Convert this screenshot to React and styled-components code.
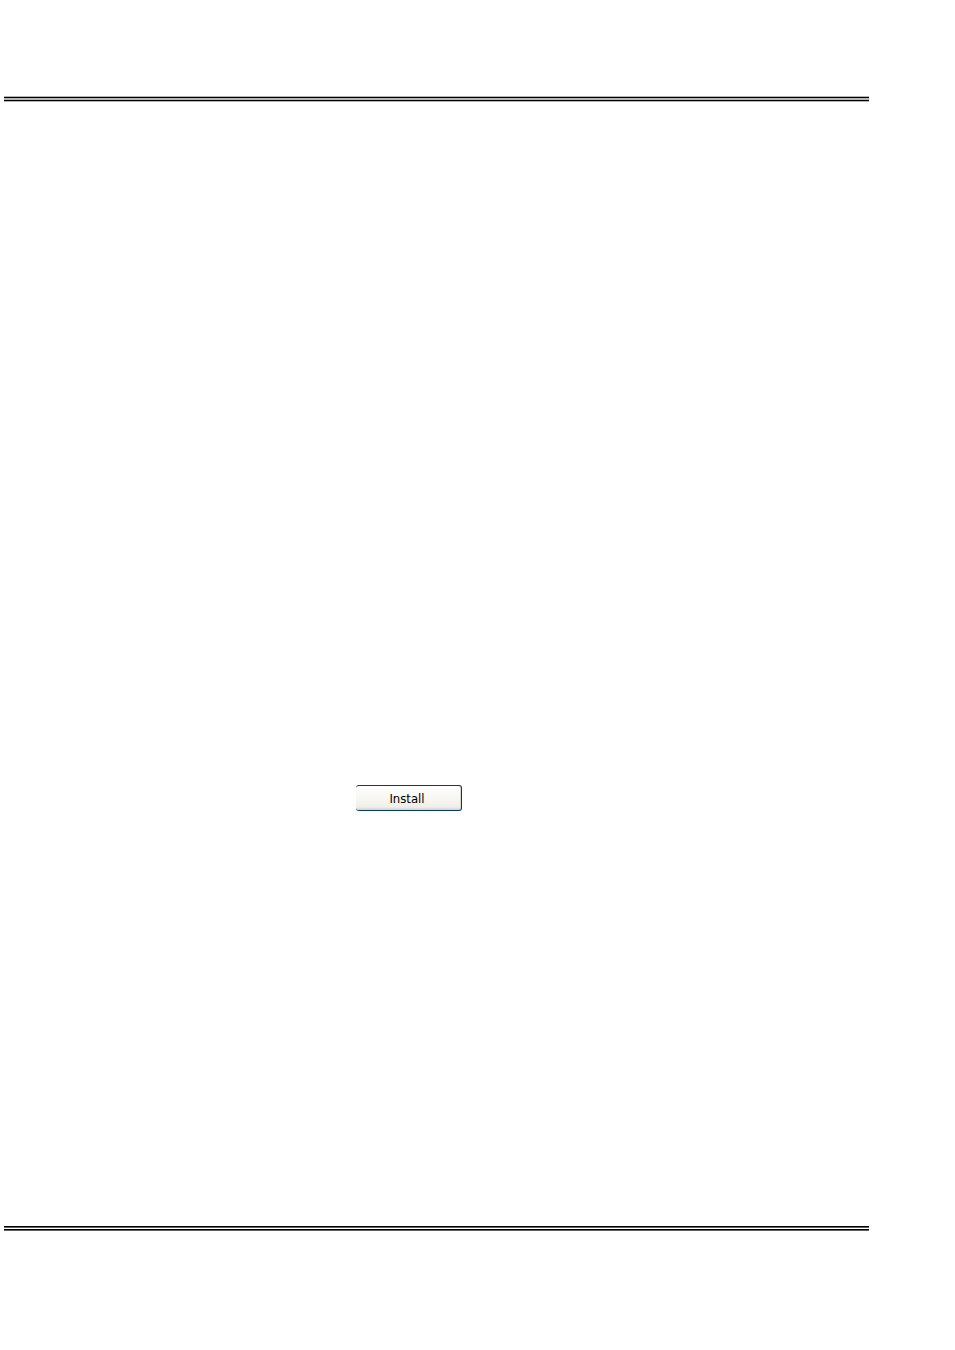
import React, { Fragment } from 'react';
import styled, { createGlobalStyle } from 'styled-components';

function App() {
  return (
    <Fragment>
      <GlobalStyle />
      <StyledPage>
        <StyledHeaderRule />
        <StyledContent>
          <StyledButton type="button">Install</StyledButton>
        </StyledContent>
        <StyledFooterRule />
      </StyledPage>
    </Fragment>
  );
}

const GlobalStyle = createGlobalStyle`
  * {
    box-sizing: border-box;
  }

  body {
    margin: 0;
    background: #ffffff;
  }
`;

const StyledPage = styled.div`
  display: flex;
  flex-direction: column;
  min-height: 100vh;
  padding: 96px 86px 119px 4px;
`;

const StyledRule = styled.hr`
  width: 100%;
  margin: 0;
  border: none;
  flex: none;
`;

const StyledHeaderRule = styled(StyledRule)`
  height: 6px;
  background: linear-gradient(
    #b4b4b4 1px,
    #000000 1px 2px,
    #b4b4b4 2px 4px,
    #000000 4px 5px,
    #b4b4b4 5px
  );
`;

const StyledFooterRule = styled(StyledRule)`
  height: 5px;
  background: linear-gradient(
    #000000 1px,
    #606060 1px 2px,
    #ffffff 2px 3px,
    #000000 3px 4px,
    #606060 4px
  );
`;

const StyledContent = styled.main`
  display: flex;
  flex: 1;
  align-items: flex-start;
  padding: 683px 0 0 352px;
`;

// the left side of the button has no border
const StyledButton = styled.button`
  width: 106px;
  height: 26px;
  padding: 1px 3px 0 0;
  border: 1px solid #003c74;
  border-left: none;
  border-radius: 3px;
  background: linear-gradient(#ffffff, #f6f5f0 60%, #f0eee6 88%, #d6d0c5);
  box-shadow: inset -1px 0 0 #d9d6cc;
  color: #000000;
  font-family: 'DejaVu Sans Condensed', Tahoma, 'DejaVu Sans', sans-serif;
  font-size: 13px;
  line-height: 23px;
  text-align: center;
`;

export default App;
